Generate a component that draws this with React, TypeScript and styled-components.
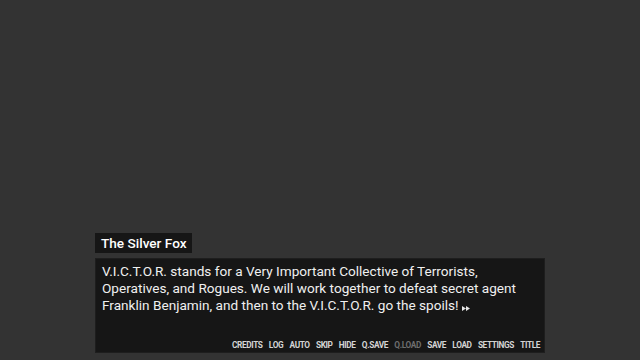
import styled, { createGlobalStyle } from 'styled-components';

const GlobalStyle = createGlobalStyle`
  html, body {
    margin: 0;
    padding: 0;
    background: #333333;
  }
  body {
    font-family: Roboto, 'Liberation Sans', sans-serif;
  }
`;

const quickMenu = [
  { label: 'CREDITS' },
  { label: 'LOG' },
  { label: 'AUTO' },
  { label: 'SKIP' },
  { label: 'HIDE' },
  { label: 'Q.SAVE' },
  { label: 'Q.LOAD', disabled: true },
  { label: 'SAVE' },
  { label: 'LOAD' },
  { label: 'SETTINGS' },
  { label: 'TITLE' },
];

const App = () => {
  return (
    <>
      <GlobalStyle />
      <Stage>
        <Dialogue>
          <NameTag>The Silver Fox</NameTag>
          <TextBox>
            <Line>
              V.I.C.T.O.R. stands for a Very Important Collective of Terrorists,
              Operatives, and Rogues. We will work together to defeat secret agent
              Franklin Benjamin, and then to the V.I.C.T.O.R. go the spoils!
              <NextIcon viewBox="0 0 8 5">
                <path d="M0 0 L4 2.5 L0 5 Z M4 0 L8 2.5 L4 5 Z" fill="#e6e6e6" />
              </NextIcon>
            </Line>
            <QuickMenu>
              {quickMenu.map((item) => (
                <MenuButton key={item.label} $disabled={item.disabled}>
                  {item.label}
                </MenuButton>
              ))}
            </QuickMenu>
          </TextBox>
        </Dialogue>
      </Stage>
    </>
  );
};

const Stage = styled.div`
  width: 640px;
  height: 360px;
  display: flex;
  flex-direction: column;
  justify-content: flex-end;
  align-items: center;
  padding-bottom: 7px;
  box-sizing: border-box;
`;

const Dialogue = styled.div`
  width: 450px;
  display: flex;
  flex-direction: column;
  align-items: flex-start;
  gap: 5px;
`;

const NameTag = styled.div`
  height: 20px;
  line-height: 20px;
  padding: 0 5px 0 6px;
  background: #161616;
  color: #ffffff;
  font-size: 13.6px;
  font-weight: 500;
`;

const TextBox = styled.div`
  width: 100%;
  height: 95px;
  box-sizing: border-box;
  padding: 4px 4px 1px 6px;
  background: #161616;
  border: 1px solid #1e1e1e;
  display: flex;
  flex-direction: column;
  justify-content: space-between;
`;

const Line = styled.div`
  color: #f0f0f0;
  font-size: 13.6px;
  line-height: 17px;
`;

const NextIcon = styled.svg`
  width: 8px;
  height: 5px;
  margin-left: 3px;
  vertical-align: -1px;
`;

const QuickMenu = styled.div`
  display: flex;
  justify-content: flex-end;
  gap: 6.3px;
`;

const MenuButton = styled.span<{ $disabled?: boolean }>`
  font-size: 8.3px;
  font-weight: 700;
  letter-spacing: -0.4px;
  line-height: 12px;
  color: ${(p) => (p.$disabled ? '#6e6e6e' : '#d4d4d4')};
  cursor: pointer;
`;

export default App;
